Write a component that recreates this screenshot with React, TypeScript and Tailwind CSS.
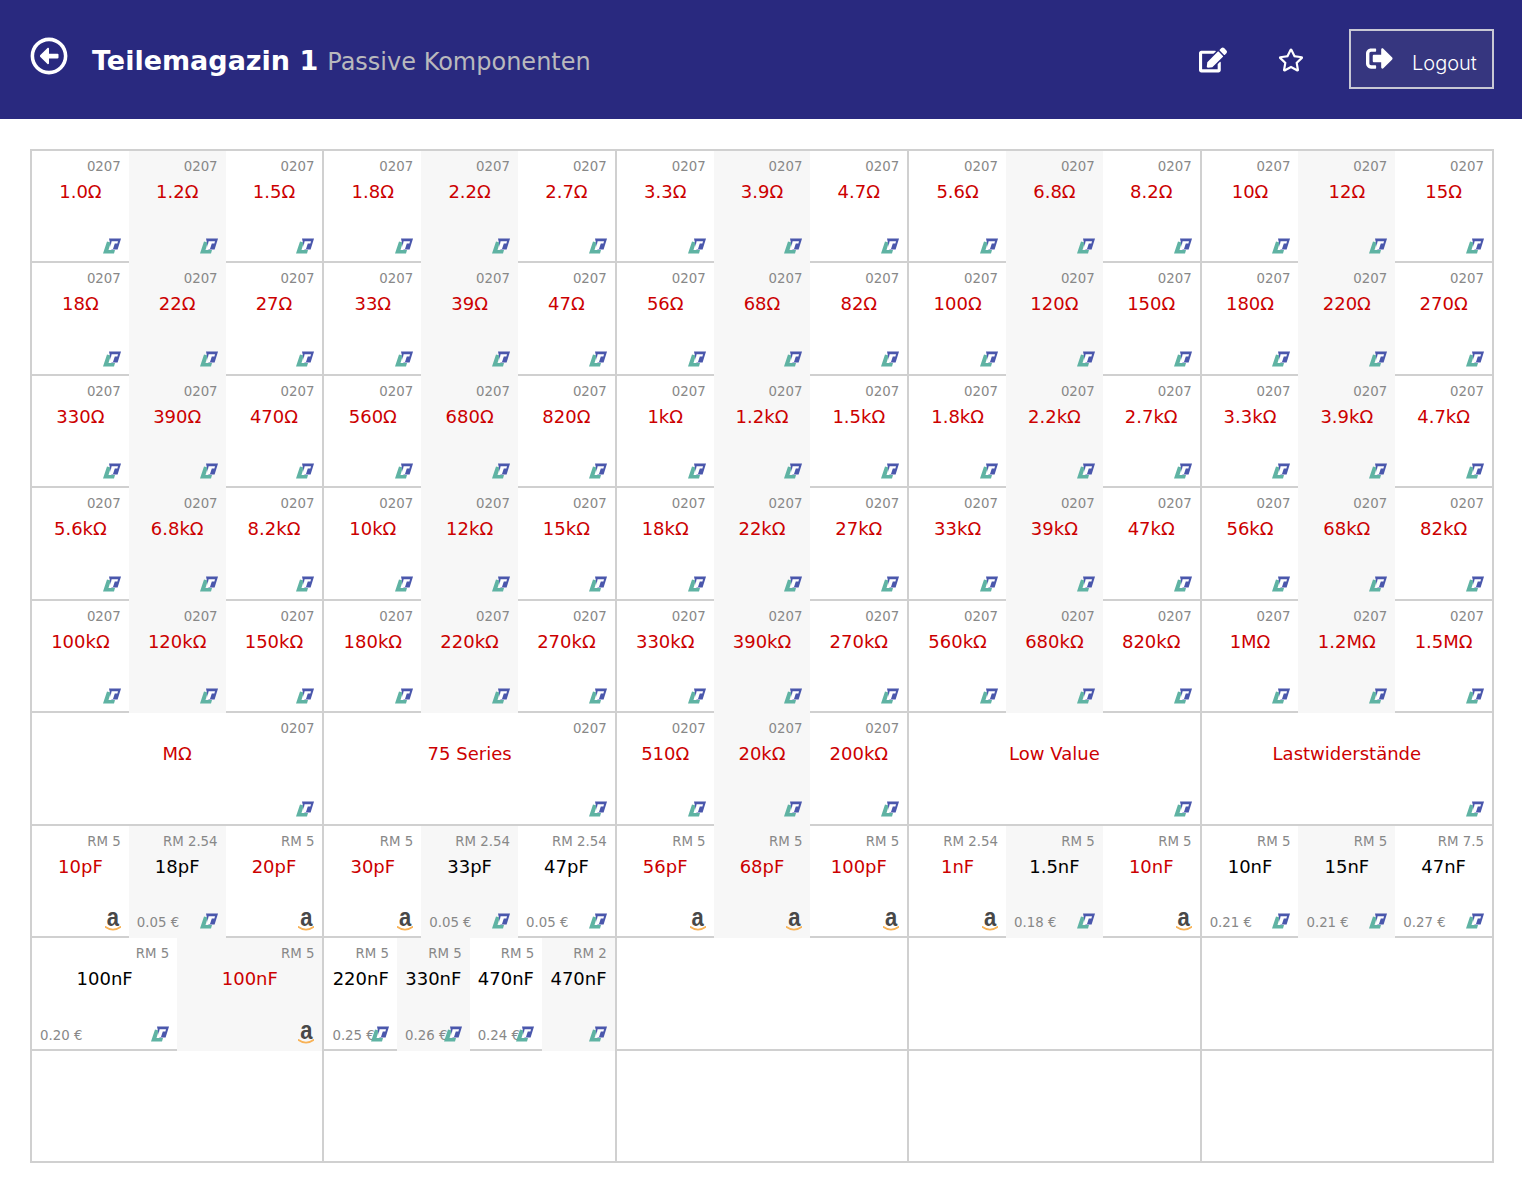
import { FaRegArrowAltCircleLeft, FaEdit, FaRegStar, FaSignOutAlt } from "react-icons/fa";

type Part = {
  label?: string;
  value?: string;
  black?: boolean;
  price?: string;
  shop?: "logo" | "amazon";
};

const resistor = (value: string): Part => ({ label: "0207", value, shop: "logo" });
const stocked = (label: string, value: string, price?: string): Part => ({ label, value, price, black: true, shop: "logo" });
const amazon = (label: string, value: string): Part => ({ label, value, shop: "amazon" });

const threes = (values: string[]) => {
  const blocks: Part[][] = [];
  for (let i = 0; i < values.length; i += 3) blocks.push(values.slice(i, i + 3).map(resistor));
  return blocks;
};

const rows: Part[][][] = [
  threes(["1.0Ω", "1.2Ω", "1.5Ω", "1.8Ω", "2.2Ω", "2.7Ω", "3.3Ω", "3.9Ω", "4.7Ω", "5.6Ω", "6.8Ω", "8.2Ω", "10Ω", "12Ω", "15Ω"]),
  threes(["18Ω", "22Ω", "27Ω", "33Ω", "39Ω", "47Ω", "56Ω", "68Ω", "82Ω", "100Ω", "120Ω", "150Ω", "180Ω", "220Ω", "270Ω"]),
  threes(["330Ω", "390Ω", "470Ω", "560Ω", "680Ω", "820Ω", "1kΩ", "1.2kΩ", "1.5kΩ", "1.8kΩ", "2.2kΩ", "2.7kΩ", "3.3kΩ", "3.9kΩ", "4.7kΩ"]),
  threes(["5.6kΩ", "6.8kΩ", "8.2kΩ", "10kΩ", "12kΩ", "15kΩ", "18kΩ", "22kΩ", "27kΩ", "33kΩ", "39kΩ", "47kΩ", "56kΩ", "68kΩ", "82kΩ"]),
  threes(["100kΩ", "120kΩ", "150kΩ", "180kΩ", "220kΩ", "270kΩ", "330kΩ", "390kΩ", "270kΩ", "560kΩ", "680kΩ", "820kΩ", "1MΩ", "1.2MΩ", "1.5MΩ"]),
  [
    [resistor("MΩ")],
    [resistor("75 Series")],
    [resistor("510Ω"), resistor("20kΩ"), resistor("200kΩ")],
    [{ value: "Low Value", shop: "logo" }],
    [{ value: "Lastwiderstände", shop: "logo" }],
  ],
  [
    [amazon("RM 5", "10pF"), stocked("RM 2.54", "18pF", "0.05 €"), amazon("RM 5", "20pF")],
    [amazon("RM 5", "30pF"), stocked("RM 2.54", "33pF", "0.05 €"), stocked("RM 2.54", "47pF", "0.05 €")],
    [amazon("RM 5", "56pF"), amazon("RM 5", "68pF"), amazon("RM 5", "100pF")],
    [amazon("RM 2.54", "1nF"), stocked("RM 5", "1.5nF", "0.18 €"), amazon("RM 5", "10nF")],
    [stocked("RM 5", "10nF", "0.21 €"), stocked("RM 5", "15nF", "0.21 €"), stocked("RM 7.5", "47nF", "0.27 €")],
  ],
  [
    [stocked("RM 5", "100nF", "0.20 €"), amazon("RM 5", "100nF")],
    [stocked("RM 5", "220nF", "0.25 €"), stocked("RM 5", "330nF", "0.26 €"), stocked("RM 5", "470nF", "0.24 €"), stocked("RM 2", "470nF")],
    [],
    [],
    [],
  ],
  [[], [], [], [], []],
];

function ShopLogo() {
  return (
    <svg viewBox="0 0 18 16" className="w-[18px] h-[16px] shrink-0 -ml-[1px]">
      <path d="M4 3.5L0 15.5H11L12 12H5.5L7.8 4.5z" fill="#5fb3a3" />
      <path d="M6 0.5H18L14.6 11.5H8.5z" fill="#4a57ac" />
      <path d="M8.6 3.2H15L14.4 5.4H11.8L10 11H7z" fill="#ffffff" />
    </svg>
  );
}

function AmazonLogo() {
  return (
    <div className="flex flex-col items-center w-[16px] h-[22px] shrink-0 -mb-[2px]">
      <span className="font-['Liberation_Sans',sans-serif] font-bold text-[22px] leading-[17px] text-[#484848] scale-y-[1.2]">a</span>
      <svg viewBox="0 0 16 5" className="w-[16px] h-[5px]">
        <path d="M0.5 1c4.5 3.4 10.500 3.400 15 0" fill="none" stroke="#f8b256" strokeWidth="1.8" strokeLinecap="round" />
      </svg>
    </div>
  );
}

function Cell({ part, shaded, first }: { part: Part; shaded: boolean; first: boolean }) {
  return (
    <div
      className={`flex-[1_1_0] min-w-0 -mb-[2px] flex flex-col px-[8px] pb-[9px] ${first ? "mt-[0.5px] pt-[6.5px]" : "pt-[7px]"} ${shaded ? "bg-[#f7f7f7]" : ""}`}
    >
      <div className="h-[18px] text-right text-[13.33px] leading-[18px] text-[#888888] whitespace-nowrap">{part.label}</div>
      <div className={`mt-[3.2px] -mx-[8px] text-center text-[18px] leading-[26px] whitespace-nowrap ${part.black ? "text-[#000000]" : "text-[#cc0000]"}`}>
        {part.value}
      </div>
      <div className="mt-auto flex items-end h-[22px]">
        <span className="w-0 -mb-[3px] text-[13.33px] leading-[18px] text-[#888888] whitespace-nowrap">{part.price}</span>
        <div className="ml-auto">{part.shop === "logo" ? <ShopLogo /> : part.shop === "amazon" ? <AmazonLogo /> : null}</div>
      </div>
    </div>
  );
}

export default function App() {
  return (
    <div className="min-h-[1188px] bg-white font-['DejaVu_Sans',sans-serif]">
      <div className="h-[119px] bg-[#29297f] flex items-center pl-[30px] pr-[28px]">
        <FaRegArrowAltCircleLeft className="text-white text-[38px] -mt-[7px]" />
        <div className="ml-[24px] flex items-baseline whitespace-nowrap mt-[3px]">
          <span className="text-[27px] font-bold text-white">Teilemagazin 1</span>
          <span className="ml-[9px] text-[24px] text-[#b9b9bd]">Passive Komponenten</span>
        </div>
        <div className="ml-auto flex items-center">
          <FaEdit className="text-white text-[28px] mr-[51px]" />
          <FaRegStar className="text-white text-[26px] mr-[45px]" />
          <div className="w-[145px] h-[60px] -mt-[1px] border-2 border-[#c8c8d4] bg-[#36367f] flex items-center pl-[15px]">
            <FaSignOutAlt className="text-white text-[27px] -mt-[1px]" />
            <span className="ml-[19px] mt-[7px] font-['Inter',sans-serif] font-light text-[20px] text-white">Logout</span>
          </div>
        </div>
      </div>

      <div className="mt-[30px] ml-[30px] w-[1464px] border-t-2 border-r-2 border-[#d0d0d0]">
        <div className="-mt-[0.5px]">
          {rows.map((blocks, r) => (
            <div key={r} className="flex h-[112.5px]">
              {blocks.map((cells, b) => (
                <div key={b} className="flex-[1_1_0] min-w-0 flex border-l-2 border-b-2 border-[#d0d0d0]">
                  {cells.map((part, c) => (
                    <Cell key={c} part={part} shaded={c % 2 === 1} first={r === 0} />
                  ))}
                </div>
              ))}
            </div>
          ))}
        </div>
      </div>
    </div>
  );
}
